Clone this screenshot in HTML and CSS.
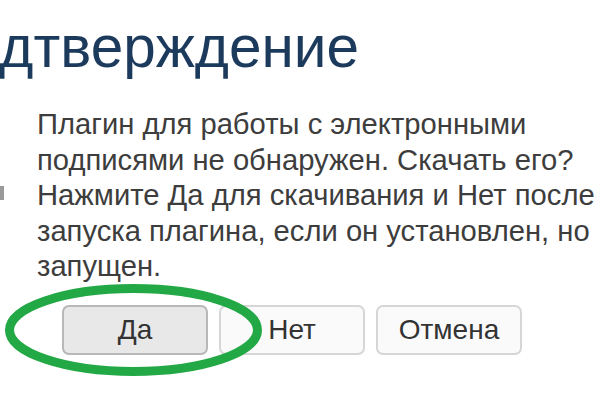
FILE: index.html
```html
<!DOCTYPE html>
<html lang="ru">
<head>
    <meta charset="UTF-8">
    <meta name="viewport" content="width=device-width, initial-scale=1.0">
    <title>Подтверждение</title>
    <link rel="stylesheet" href="styles.css">
</head>
<body>
    <div class="dialog">
        <h1 class="title">Подтверждение</h1>
        <div class="content">
            <div class="icon"></div>
            <p class="message">Плагин для работы с электронными<br>подписями не обнаружен. Скачать его?<br>Нажмите Да для скачивания и Нет после<br>запуска плагина, если он установлен, но<br>запущен.</p>
        </div>
        <div class="buttons">
            <button class="btn btn-default">Да</button>
            <button class="btn">Нет</button>
            <button class="btn">Отмена</button>
            <svg class="mark" width="270" height="100" viewBox="0 0 270 100">
                <ellipse cx="133.5" cy="50" rx="124" ry="41.5" fill="none" stroke="#22a845" stroke-width="9"/>
            </svg>
        </div>
    </div>
</body>
</html>
```

FILE: styles.css
```css
html, body {
    margin: 0;
    background: #ffffff;
    overflow: hidden;
}

.dialog {
    width: 600px;
    height: 400px;
    font-family: "Liberation Sans", Arial, sans-serif;
}

.title {
    margin: 0 0 0 -74px;
    padding-top: 12px;
    font-size: 58.5px;
    font-weight: normal;
    line-height: 70px;
    color: #1b3a5c;
    white-space: nowrap;
}

.content {
    display: flex;
    margin-top: 25px;
}

.icon {
    width: 4px;
    height: 14px;
    margin-top: 79px;
    margin-right: 33px;
    background: #9a9a9a;
    flex-shrink: 0;
}

.message {
    margin: 0;
    font-size: 29.2px;
    line-height: 35.5px;
    color: #3d3d3d;
    white-space: nowrap;
}

.buttons {
    position: relative;
    display: flex;
    gap: 11px;
    margin-top: 20px;
    padding-left: 62px;
}

.btn {
    width: 146px;
    height: 50px;
    padding: 0;
    font-family: "Liberation Sans", Arial, sans-serif;
    font-size: 28px;
    color: #333333;
    background: #fafafa;
    border: 2px solid #d6d6d6;
    border-radius: 7px;
}

.btn-default {
    background: #e8e8e8;
    border-color: #b8b8b8;
}

.mark {
    position: absolute;
    left: 0;
    top: -25px;
}
```
